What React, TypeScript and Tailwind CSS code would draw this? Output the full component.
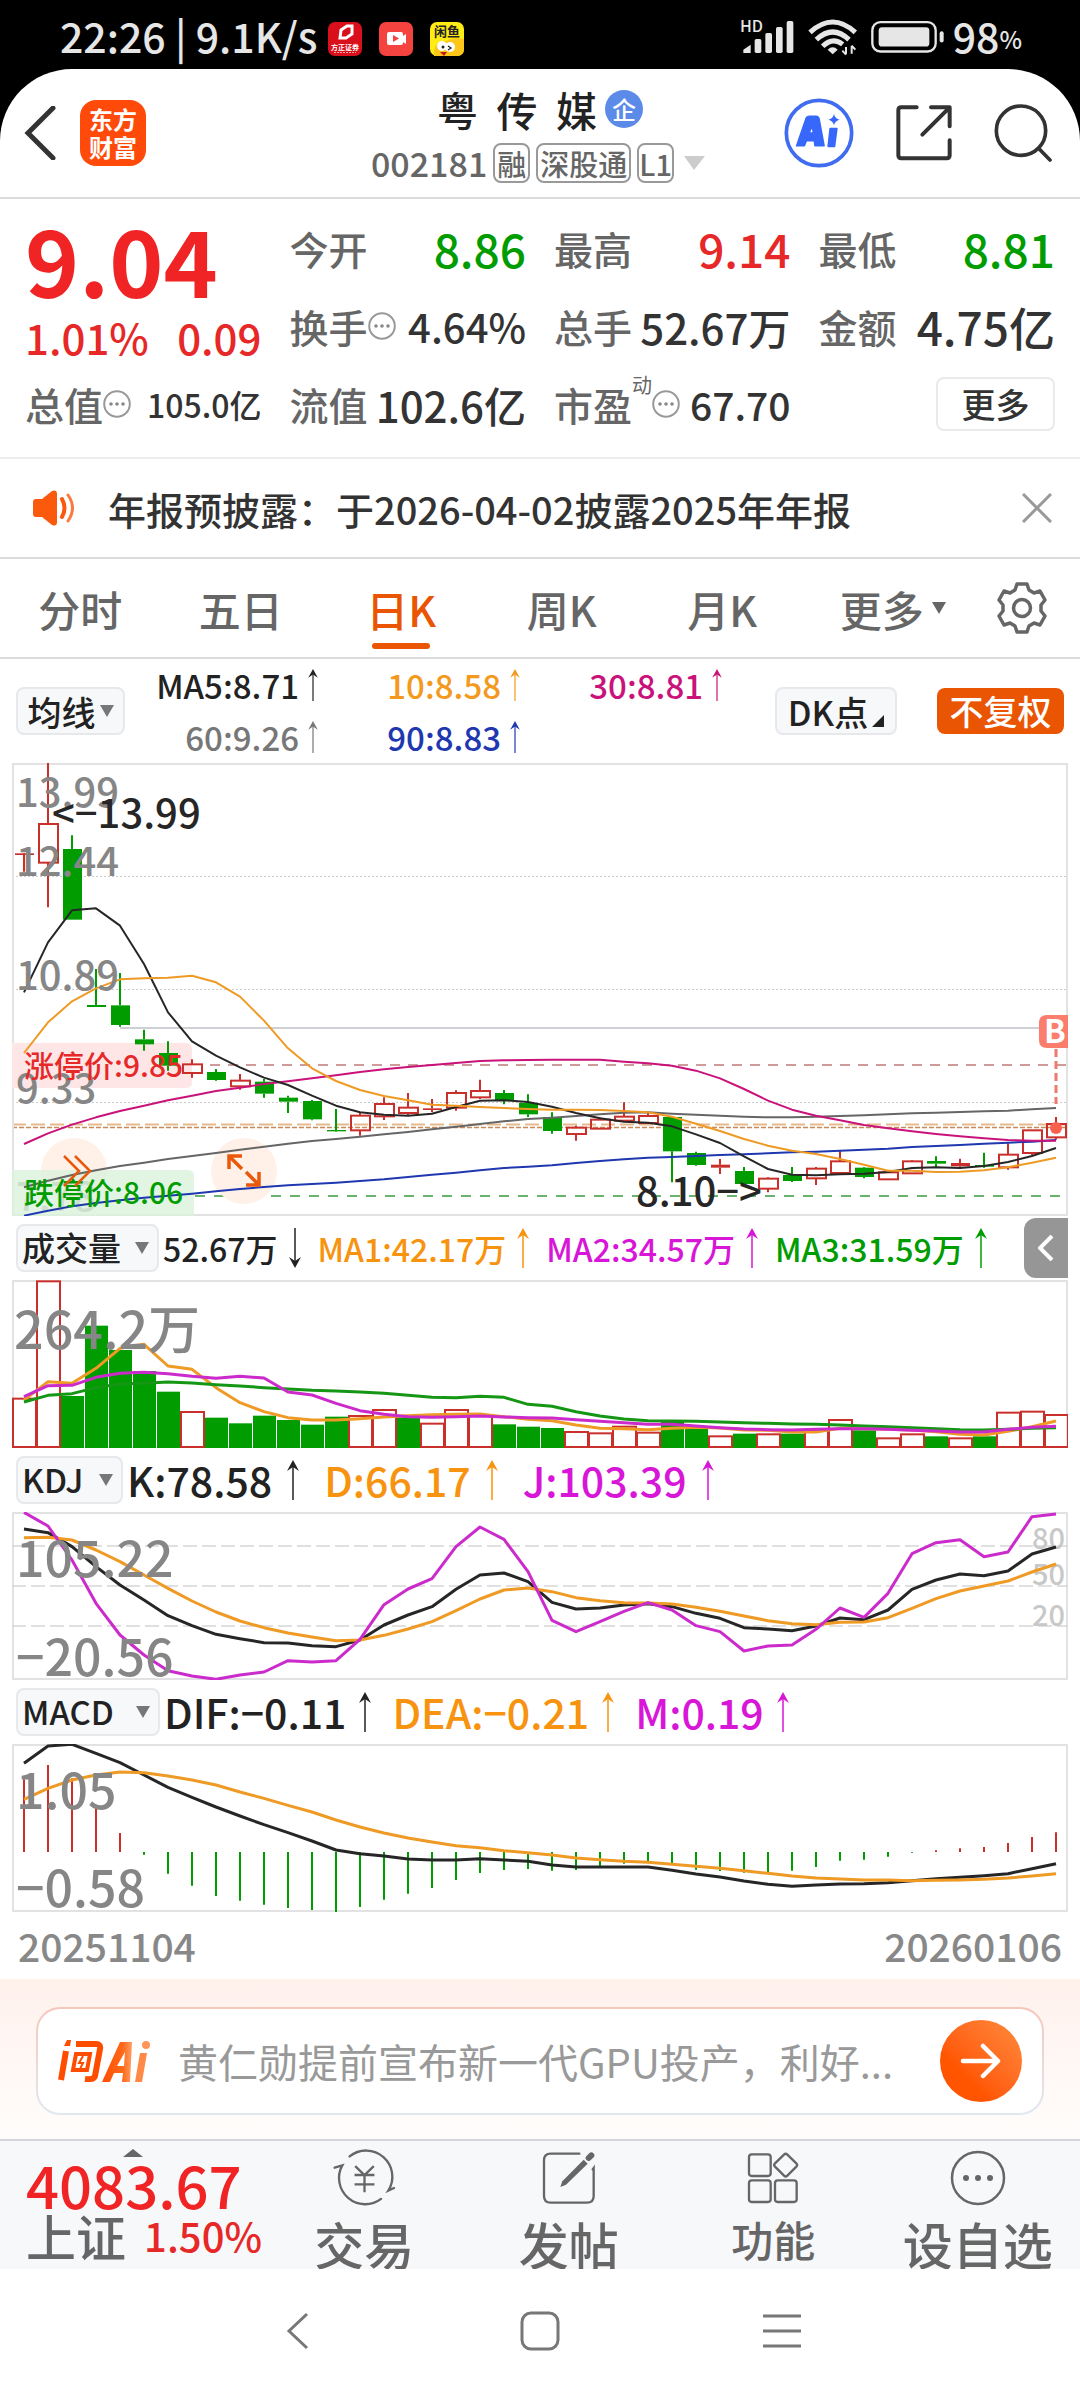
import React from 'react';

const RED = '#c9302c';
const GREEN = '#009c00';

// チャートの横位置：44本、間隔24px
const STEP = 24;
const cx = (i: number) => 12 + i * STEP;

// [high, top, bottom, low, type]  r = 中空, s = 赤塗り, g = 緑塗り
type Candle = [number, number, number, number, 'r' | 's' | 'g'];

// 縦の値は1/3px単位。枠の上端は各チャートのtopで指定
const candles: Candle[] = [
  [315, 313, 318, 368, 's'], [42, 225, 341, 475, 'r'], [259, 300, 512, 512, 'g'], [660, 768, 774, 774, 'g'],
  [672, 769, 828, 833, 'g'], [842, 871, 886, 905, 'g'], [877, 912, 950, 965, 'g'], [931, 946, 972, 986, 'r'],
  [960, 969, 993, 995, 'g'], [975, 995, 1012, 1022, 'r'], [990, 998, 1034, 1046, 'g'], [1040, 1046, 1058, 1092, 'g'],
  [1053, 1056, 1111, 1114, 'g'], [1080, 1143, 1147, 1148, 'g'], [1090, 1100, 1144, 1160, 'r'], [1045, 1065, 1102, 1113, 'r'],
  [1032, 1076, 1092, 1098, 'r'], [1050, 1078, 1083, 1090, 's'], [1024, 1032, 1076, 1085, 'r'], [992, 1026, 1045, 1050, 'r'],
  [1023, 1032, 1054, 1066, 'g'], [1036, 1062, 1096, 1104, 'g'], [1090, 1104, 1146, 1154, 'g'], [1130, 1136, 1155, 1175, 'r'],
  [1105, 1112, 1139, 1140, 'r'], [1060, 1103, 1115, 1115, 'r'], [1092, 1101, 1122, 1124, 'r'], [1104, 1104, 1207, 1300, 'g'],
  [1208, 1212, 1248, 1250, 'g'], [1230, 1247, 1256, 1275, 's'], [1254, 1266, 1305, 1305, 'g'], [1285, 1289, 1319, 1330, 'r'],
  [1254, 1278, 1296, 1299, 'g'], [1254, 1259, 1288, 1308, 'r'], [1206, 1237, 1272, 1272, 'r'], [1254, 1256, 1284, 1288, 'g'],
  [1270, 1270, 1291, 1292, 'r'], [1234, 1237, 1273, 1275, 'r'], [1222, 1236, 1244, 1254, 'g'], [1229, 1242, 1252, 1260, 's'],
  [1211, 1248, 1253, 1256, 'g'], [1182, 1217, 1255, 1262, 'r'], [1143, 1144, 1212, 1218, 'r'], [1104, 1125, 1165, 1172, 'r'],
];

const ma5 = [730, 580, 484, 478, 530, 645, 790, 877, 920, 955, 986, 1008, 1040, 1070, 1090, 1097, 1100, 1094, 1074, 1055, 1054, 1059, 1073, 1092, 1108, 1118, 1121, 1132, 1156, 1182, 1222, 1260, 1277, 1279, 1276, 1274, 1269, 1257, 1255, 1257, 1251, 1239, 1221, 1197];
const ma10 = [912, 820, 757, 718, 691, 688, 686, 680, 700, 743, 815, 898, 958, 996, 1023, 1041, 1054, 1067, 1070, 1074, 1077, 1080, 1082, 1082, 1083, 1086, 1090, 1103, 1124, 1146, 1170, 1190, 1205, 1215, 1230, 1247, 1265, 1265, 1269, 1268, 1264, 1255, 1241, 1226];
const ma30 = [1185, 1153, 1127, 1105, 1086, 1070, 1054, 1040, 1026, 1016, 1005, 997, 988, 979, 969, 961, 954, 948, 942, 936, 934, 933, 932, 932, 932, 938, 943, 950, 965, 988, 1020, 1055, 1082, 1100, 1114, 1128, 1138, 1147, 1155, 1162, 1168, 1173, 1175, 1175];
const ma60 = [1315, 1295, 1278, 1264, 1251, 1241, 1230, 1221, 1212, 1202, 1193, 1184, 1176, 1170, 1163, 1156, 1149, 1141, 1133, 1125, 1117, 1110, 1106, 1101, 1096, 1091, 1090, 1094, 1097, 1100, 1103, 1105, 1105, 1103, 1101, 1099, 1096, 1093, 1091, 1089, 1087, 1085, 1081, 1077];
const ma90 = [1400, 1385, 1372, 1362, 1354, 1346, 1340, 1334, 1327, 1320, 1314, 1309, 1305, 1301, 1296, 1291, 1284, 1277, 1271, 1264, 1257, 1253, 1249, 1242, 1236, 1231, 1226, 1224, 1221, 1218, 1216, 1213, 1210, 1208, 1205, 1202, 1199, 1194, 1191, 1188, 1184, 1181, 1178, 1173];

const volumes = [563, 211, 558, 347, 420, 483, 545, 603, 623, 640, 617, 630, 644, 620, 615, 597, 622, 638, 597, 615, 643, 650, 654, 663, 667, 647, 665, 630, 655, 676, 671, 670, 671, 657, 627, 661, 682, 670, 679, 682, 679, 605, 602, 612];
const volumeUp = 'rrgggggrggggggrrgrrrgggrrrrggrgrgrrgrrgrgrrr';
const vol1 = [570, 515, 520, 475, 415, 403, 468, 478, 533, 578, 605, 623, 630, 630, 626, 621, 617, 614, 613, 612, 620, 628, 632, 645, 655, 656, 659, 655, 652, 654, 660, 661, 666, 666, 655, 656, 658, 660, 665, 673, 675, 664, 650, 633];
const vol2 = [560, 527, 526, 502, 490, 487, 491, 499, 505, 499, 504, 546, 555, 580, 602, 613, 620, 622, 620, 618, 621, 623, 624, 629, 634, 638, 643, 643, 648, 653, 657, 659, 660, 658, 656, 656, 658, 661, 663, 666, 666, 658, 652, 649];
const vol3 = [576, 556, 551, 533, 522, 520, 516, 519, 524, 528, 533, 537, 541, 543, 546, 550, 556, 562, 563, 559, 562, 583, 589, 605, 618, 627, 632, 633, 634, 636, 638, 640, 642, 643, 645, 648, 650, 653, 656, 659, 660, 658, 655, 653];

const kLine = [237, 248, 290, 350, 405, 450, 497, 527, 553, 566, 578, 579, 587, 590, 570, 525, 495, 470, 418, 375, 369, 395, 457, 477, 474, 465, 461, 470, 490, 505, 533, 537, 542, 528, 504, 509, 480, 418, 390, 372, 377, 363, 312, 291];
const dLine = [263, 262, 270, 300, 335, 375, 415, 453, 486, 513, 533, 549, 561, 572, 570, 556, 537, 515, 482, 447, 420, 414, 425, 443, 452, 458, 459, 462, 472, 484, 498, 512, 521, 524, 517, 516, 503, 475, 446, 423, 408, 393, 366, 342];
const jLine = [187, 228, 330, 460, 555, 615, 662, 678, 688, 675, 666, 632, 636, 632, 568, 464, 417, 386, 290, 231, 268, 365, 511, 545, 515, 484, 458, 480, 527, 545, 603, 588, 585, 538, 474, 502, 430, 311, 278, 269, 320, 306, 200, 192];

const macd = [298, 255, 295, 385, 459, 524, 581, 617, 648, 662, 674, 684, 690, 696, 681, 659, 641, 624, 600, 579, 570, 567, 572, 570, 561, 551, 543, 554, 569, 573, 578, 576, 572, 561, 542, 539, 530, 518, 511, 505, 501, 489, 471, 457];
const dif = [250, 198, 193, 220, 248, 285, 322, 352, 381, 408, 434, 458, 483, 510, 521, 528, 537, 540, 540, 536, 540, 544, 555, 561, 561, 561, 561, 571, 582, 591, 603, 613, 619, 615, 612, 611, 608, 602, 596, 592, 587, 581, 566, 551];
const dea = [358, 325, 300, 285, 276, 278, 288, 300, 315, 336, 355, 376, 396, 420, 441, 459, 474, 486, 497, 503, 512, 518, 525, 534, 539, 544, 547, 553, 559, 565, 572, 580, 588, 594, 597, 600, 600, 602, 601, 600, 598, 594, 588, 581];

function Line({ data, top, color, width = 3 }: { data: number[]; top: number; color: string; width?: number }) {
  const points = data.map((v, i) => `${cx(i)},${(v - top) / 3}`).join(' ');
  return <polyline points={points} fill="none" stroke={color} strokeWidth={width} strokeLinejoin="round" />;
}

function Frame({ height }: { height: number }) {
  return <rect x="1" y="1" width="1054" height={height - 2} fill="none" stroke="#e2e2e4" strokeWidth="2" />;
}

function Arrow({ down = false, small = false }: { down?: boolean; small?: boolean }) {
  return (
    <svg viewBox="0 0 14 40" className={`${small ? 'h-8 w-3' : 'h-10 w-3.5'} ${down ? 'rotate-180' : ''} shrink-0`} aria-hidden="true">
      <path d="M7 3V40" stroke="currentColor" strokeWidth="1.5" />
      <path d="M7 0L13 11L7 7L1 11Z" fill="currentColor" />
    </svg>
  );
}

function Caret({ className = '' }: { className?: string }) {
  return (
    <svg viewBox="0 0 14 12" className={`h-3 w-3.5 shrink-0 ${className}`} aria-hidden="true">
      <path d="M0 0H14L7 12Z" fill="currentColor" />
    </svg>
  );
}

function Dots() {
  return (
    <svg viewBox="0 0 28 28" className="h-7 w-7 shrink-0" aria-hidden="true">
      <circle cx="14" cy="14" r="12.8" fill="none" stroke="#999" strokeWidth="2" />
      <circle cx="8" cy="14" r="1.8" fill="#888" />
      <circle cx="14" cy="14" r="1.8" fill="#888" />
      <circle cx="20" cy="14" r="1.8" fill="#888" />
    </svg>
  );
}

function StatusBar() {
  return (
    <div className="flex h-[69px] items-center pl-[60px] pr-[58px] pt-1 font-medium text-[#e6e6e6]">
      <span className="whitespace-nowrap pb-1 text-[41px] leading-[48px]">22:26 | 9.1K/s</span>
      <div className="ml-2.5 flex items-center gap-[17px] pt-1">
        <svg viewBox="0 0 34 34" className="h-[34px] w-[34px]">
          <rect width="34" height="34" rx="7" fill="#d9101c" />
          <path d="M13 8L19 4H24V12L18 16H12Z" fill="none" stroke="#fff" strokeWidth="3" />
          <text x="17" y="28" textAnchor="middle" fontSize="7" fontWeight="700" fill="#fff">方正证券</text>
          <path d="M6 30.500H28" stroke="#f4a5a9" strokeWidth="1" strokeDasharray="2 1" />
        </svg>
        <svg viewBox="0 0 34 34" className="h-[34px] w-[34px]">
          <rect width="34" height="34" rx="7" fill="#f5443f" />
          <path d="M10 10H22Q24 10 24 12V14L27 12V22L24 20V21Q24 23 22 23H10Q8 23 8 21V12Q8 10 10 10Z" fill="#fff" />
          <path d="M14 13L20 16.500L14 20Z" fill="#f5443f" />
        </svg>
        <svg viewBox="0 0 34 34" className="h-[34px] w-[34px]">
          <rect width="34" height="34" rx="7" fill="#ffec14" />
          <path d="M4 34Q3 18 17 19Q22 15 34 17V27Q34 34 27 34Z" fill="#ffc61a" />
          <text x="17" y="14" textAnchor="middle" fontSize="13" fontWeight="700" fill="#222">闲鱼</text>
          <circle cx="12" cy="24" r="5" fill="#fff" />
          <circle cx="20" cy="25" r="5" fill="#fff" />
          <circle cx="13" cy="25" r="1.500" fill="#222" />
          <path d="M18 24L21 26L18 28" fill="none" stroke="#222" strokeWidth="1.300" />
          <path d="M10 30H17L14 34Z" fill="#c3171c" />
        </svg>
      </div>
      <div className="ml-auto flex items-center">
        <svg viewBox="40 30 165 120" className="h-10 w-[55px] overflow-visible" fill="currentColor">
          <text x="40" y="75" fontSize="48" fontWeight="500">HD</text>
          <path d="M50 138V128L72 113V138Z" />
          <rect x="84" y="96" width="20" height="42" rx="5" />
          <rect x="116" y="78" width="20" height="60" rx="5" />
          <rect x="148" y="60" width="20" height="78" rx="5" />
          <rect x="180" y="42" width="20" height="96" rx="5" />
        </svg>
        <svg viewBox="236 30 156 120" className="ml-3 h-10 w-[52px]" fill="none" stroke="currentColor" strokeWidth="15">
          <path d="M245 76Q313 14 381 76" />
          <path d="M264 98Q313 52 362 98" />
          <path d="M283 118Q313 88 343 112" />
          <path d="M298 128Q313 114 328 128L313 142Z" fill="currentColor" stroke="none" />
          <path d="M353 142V120M353 143L342 131M370 116V140M370 116L381 128" strokeWidth="6" />
        </svg>
        <svg viewBox="432 36 222 104" className="ml-3 h-[35px] w-[74px]">
          <rect x="436" y="45" width="190" height="88" rx="24" fill="none" stroke="currentColor" strokeWidth="7" />
          <rect x="455" y="60" width="152" height="58" rx="10" fill="currentColor" />
          <rect x="638" y="72" width="12" height="34" rx="6" fill="currentColor" />
        </svg>
        <span className="ml-2 pb-1 text-[41px] leading-[48px]">98</span>
        <span className="pt-1 text-2xl">%</span>
      </div>
    </div>
  );
}

function Header() {
  const tag = 'rounded-lg border-2 border-[#999] text-[29px] leading-9';
  return (
    <header className="grid h-[130px] grid-cols-[1fr_auto_1fr] items-center border-b-2 border-[#dcdcdc] pl-6 pr-7">
      <div className="flex items-center gap-6">
        <button type="button" aria-label="返回">
          <svg viewBox="0 0 32 54" className="h-[54px] w-8" fill="none" stroke="#333" strokeWidth="5">
            <path d="M29 2L4 27L29 52" strokeLinecap="round" />
          </svg>
        </button>
        <div className="flex h-[66px] w-[66px] flex-col items-center justify-center rounded-2xl bg-[#ff4a0a] text-2xl font-bold leading-7 text-white">
          <span>东方</span>
          <span>财富</span>
        </div>
      </div>
      <div className="flex flex-col items-center">
        <div className="flex items-center gap-2 pb-2 pl-1">
          <h1 className="whitespace-pre text-[41px] font-medium leading-[52px] text-[#222]">粤  传  媒</h1>
          <span className="flex h-[38px] w-[38px] items-center justify-center rounded-full bg-[#5c8ae8] text-2xl font-medium text-white">企</span>
        </div>
        <div className="flex items-center gap-1.5 font-medium text-[#666]">
          <span className="text-[34px] leading-10">002181</span>
          <span className={`${tag} px-0.5`}>融</span>
          <span className={`${tag} px-0.5`}>深股通</span>
          <span className={tag}>L1</span>
          <svg viewBox="0 0 21 14" className="ml-1 h-3.5 w-[21px]" aria-hidden="true">
            <path d="M0 0H21L10 14Z" fill="#ccc" />
          </svg>
        </div>
      </div>
      <div className="flex items-center justify-end gap-[42px]">
        <button type="button" aria-label="AI">
          <svg viewBox="0 0 210 210" className="h-[70px] w-[70px]">
            <circle cx="105" cy="105" r="98" fill="none" stroke="#3f6cf0" strokeWidth="11" />
            <path d="M38 143L66 62Q69 55 77 55H96Q103 55 105 62L120 143H93L91 128H67L61 143Z M75 105H88L85 82Z" fill="#3768fb" fillRule="evenodd" stroke="#3768fb" strokeWidth="5" strokeLinejoin="round" />
            <path d="M139 92H158L151 145H133Z" fill="#3768fb" stroke="#3768fb" strokeWidth="6" strokeLinejoin="round" />
            <path d="M150 48Q153 62 167 65Q153 68 150 82Q147 68 133 65Q147 62 150 48Z" fill="#3768fb" />
          </svg>
        </button>
        <button type="button" aria-label="分享">
          <svg viewBox="0 0 168 168" className="h-14 w-14" fill="none" stroke="#333" strokeWidth="12" strokeLinecap="round" strokeLinejoin="round">
            <path d="M62 7H16Q7 7 7 16V151Q7 160 16 160H152Q161 160 161 151V106" />
            <path d="M105 7H161V64M158 10L79 89" />
          </svg>
        </button>
        <button type="button" aria-label="搜索">
          <svg viewBox="0 0 174 174" className="h-[58px] w-[58px]" fill="none" stroke="#333" strokeWidth="11" strokeLinecap="round">
            <circle cx="81" cy="80" r="74" />
            <path d="M135 134L168 168" />
          </svg>
        </button>
      </div>
    </header>
  );
}

function Quote() {
  const label = 'text-[39px] text-[#666]';
  const cell = 'flex items-center justify-between whitespace-nowrap';
  return (
    <section className="grid h-[260px] grid-cols-4 gap-x-7 border-b-2 border-[#ededed] px-[25px] pt-2.5 font-medium text-[#333]">
      <div className="flex flex-col">
        <div className="h-[102px] text-[92px] font-bold leading-[98px] text-[#f02424]">9.04</div>
        <div className="flex h-[50px] items-center justify-between text-[42px] text-[#e62828]">
          <span>1.01%</span>
          <span>0.09</span>
        </div>
        <div className={`${cell} h-[78px] pt-2`}>
          <span className={label}>总值</span>
          <Dots />
          <span className="ml-auto text-[32px]">105.0亿</span>
        </div>
      </div>
      <div className="grid grid-rows-[78px_78px_78px]">
        <div className={cell}>
          <span className={label}>今开</span>
          <span className="text-[46px] text-[#009c00]">8.86</span>
        </div>
        <div className={cell}>
          <span className={label}>换手</span>
          <Dots />
          <span className="ml-auto text-[40px]">4.64%</span>
        </div>
        <div className={cell}>
          <span className={label}>流值</span>
          <span className="text-[42px]">102.6亿</span>
        </div>
      </div>
      <div className="grid grid-rows-[78px_78px_78px]">
        <div className={cell}>
          <span className={label}>最高</span>
          <span className="text-[46px] text-[#e62828]">9.14</span>
        </div>
        <div className={cell}>
          <span className={label}>总手</span>
          <span className="text-[42px]">52.67万</span>
        </div>
        <div className={cell}>
          <span className={label}>市盈</span>
          <sup className="self-start pt-5 text-xl font-normal leading-5 text-[#666]">动</sup>
          <Dots />
          <span className="ml-auto text-[39px]">67.70</span>
        </div>
      </div>
      <div className="grid grid-rows-[78px_78px_78px]">
        <div className={cell}>
          <span className={label}>最低</span>
          <span className="text-[46px] text-[#009c00]">8.81</span>
        </div>
        <div className={cell}>
          <span className={label}>金额</span>
          <span className="text-[46px]">4.75亿</span>
        </div>
        <div className="flex items-center justify-end">
          <button type="button" className="h-[54px] w-[119px] rounded-lg border-2 border-[#e8eaec] text-[34px] leading-[48px]">更多</button>
        </div>
      </div>
    </section>
  );
}

function Notice() {
  return (
    <section className="flex h-[100px] items-center border-b-2 border-[#dcdcdc] pl-8 pr-7">
      <svg viewBox="0 0 44 36" className="h-9 w-11 shrink-0">
        <path d="M4 9H10L20 1Q25 -1 25 4V32Q25 37 20 35L10 27H4Q1 27 1 24V12Q1 9 4 9Z" fill="#fb5a0d" />
        <path d="M30 9Q35 18 30 27" fill="none" stroke="#fb5a0d" strokeWidth="4" strokeLinecap="round" />
        <path d="M36 5Q45 18 36 31" fill="none" stroke="#fb7a3d" strokeWidth="3" strokeLinecap="round" />
      </svg>
      <a href="#notice" className="ml-8 whitespace-nowrap text-[38px] font-medium text-[#333]">年报预披露：于2026-04-02披露2025年年报</a>
      <button type="button" aria-label="关闭" className="ml-auto">
        <svg viewBox="0 0 30 30" className="h-[30px] w-[30px]" stroke="#999" strokeWidth="3">
          <path d="M1 1L29 29M29 1L1 29" />
        </svg>
      </button>
    </section>
  );
}

function Tabs() {
  const tab = 'flex h-full flex-1 items-center justify-center text-[42px] font-medium text-[#666]';
  return (
    <nav className="flex h-[100px] items-center border-b-2 border-[#dcdcdc]">
      <button type="button" className={tab}>分时</button>
      <button type="button" className={tab}>五日</button>
      <button type="button" className="relative flex h-full flex-1 items-center justify-center text-[42px] font-medium text-[#ea5504]">
        日K
        <span className="absolute bottom-2 h-1.5 w-[58px] rounded-full bg-[#ea5504]" />
      </button>
      <button type="button" className={tab}>周K</button>
      <button type="button" className={tab}>月K</button>
      <button type="button" className={tab}>
        <span className="ml-5 mr-2">更多</span>
        <Caret />
      </button>
      <button type="button" aria-label="设置" className="flex w-[117px] justify-center">
        <svg viewBox="0 0 52 52" className="h-[52px] w-[52px]" fill="none" stroke="#666" strokeWidth="3.500" strokeLinejoin="round">
          <path d="M21 2H31L33 8L38 11L44 9L49 18L45 23V29L49 34L44 43L38 41L33 44L31 50H21L19 44L14 41L8 43L3 34L7 29V23L3 18L8 9L14 11L19 8Z" />
          <circle cx="26" cy="26" r="8.500" />
        </svg>
      </button>
    </nav>
  );
}

function MaLegend() {
  const item = 'flex items-center justify-end gap-2';
  return (
    <div className="flex h-[104px] items-center px-4 font-medium">
      <button type="button" className="flex h-12 w-[109px] items-center justify-center gap-1 rounded-lg border-2 border-[#e6e8ec] bg-[#f7f8fa] text-[34px] text-[#222]">
        均线
        <Caret className="text-[#777]" />
      </button>
      <div className="grid grid-cols-[194px_202px_202px] text-[33px] leading-[52px]">
        <span className={`${item} text-[#222]`}>MA5:8.71<Arrow small /></span>
        <span className={`${item} text-[#f39a1e]`}>10:8.58<Arrow small /></span>
        <span className={`${item} text-[#c9137a]`}>30:8.81<Arrow small /></span>
        <span className={`${item} text-[#777]`}>60:9.26<Arrow small /></span>
        <span className={`${item} text-[#1f38b0]`}>90:8.83<Arrow small /></span>
      </div>
      <button type="button" className="ml-auto flex h-12 w-[122px] items-center justify-center gap-1 rounded-lg border-2 border-[#e6e8ec] bg-[#f7f8fa] text-[34px] text-[#222]">
        DK点
        <svg viewBox="0 0 12 12" className="mb-1.5 h-3 w-3 self-end"><path d="M12 0V12H0Z" fill="#222" /></svg>
      </button>
      <button type="button" className="ml-10 h-[46px] w-[127px] rounded-lg bg-[#ea5504] text-[34px] leading-[44px] text-white">不复权</button>
    </div>
  );
}

function KChart() {
  const y = (v: number) => (v - 42) / 3;
  return (
    <svg viewBox="0 0 1056 453" className="block w-full" fontWeight="500">
      <g stroke="#ccc" strokeDasharray="2 2">
        <path d="M0 113.500H1056" />
        <path d="M0 226.500H1056" />
        <path d="M0 339.500H1056" />
      </g>
      <path d="M108 265H1028" stroke="#cfd0d3" strokeWidth="2" />
      <path d="M0 361.500H1056" stroke="#e5b98c" strokeWidth="2" strokeDasharray="14 5" />
      <path d="M0 364.500H1056" stroke="#c98a57" strokeWidth="1.500" strokeDasharray="5 2" />
      <path d="M198 302H1056" stroke="#cf9a9a" strokeWidth="2" strokeDasharray="10 8" />
      <path d="M183 433H1056" stroke="#3a9a3f" strokeWidth="1.500" strokeDasharray="10 9" />
      <Frame height={453} />

      {/* 涨停价・跌停价のラベル背景 */}
      <path d="M0 280H174Q180 280 180 286V319Q180 325 174 325H0Z" fill="#fee6e6" />
      <circle cx="62" cy="408" r="33" fill="#fff0e8" />
      <circle cx="232" cy="408" r="33" fill="#fff0e8" />
      <text x="4" y="448" fontSize="40" fill="#868686">7.78</text>
      <path d="M0 407H176Q182 407 182 413V453H0Z" fill="#dcf2dc" fillOpacity="0.82" />

      {candles.map(([high, top, bottom, low, type], i) => {
        const color = type === 'g' ? GREEN : RED;
        return (
          <g key={i} stroke={color} strokeWidth="2">
            <path d={`M${cx(i)} ${y(high)}V${y(top)}M${cx(i)} ${y(bottom)}V${y(low)}`} />
            {type === 'r' ? (
              <rect x={cx(i) - 9} y={y(top)} width="19" height={y(bottom) - y(top)} fill="none" />
            ) : (
              <rect x={cx(i) - 9} y={y(top)} width="19" height={y(bottom) - y(top)} fill={color} stroke="none" />
            )}
          </g>
        );
      })}

      <Line data={ma60} top={42} color="#666" width={2} />
      <Line data={ma90} top={42} color="#1f38b0" width={2} />
      <Line data={ma30} top={42} color="#c9137a" width={2} />
      <Line data={ma5} top={42} color="#262626" width={2} />
      <Line data={ma10} top={42} color="#ee9a24" width={2} />

      <g fontSize="40" fill="#868686">
        <text x="4" y="44">13.99</text>
        <text x="4" y="113">12.44</text>
        <text x="4" y="227">10.89</text>
        <text x="4" y="340">9.33</text>
      </g>
      <g fontSize="40" fill="#262626">
        <text x="40" y="65">&lt;−13.99</text>
        <text x="624" y="443">8.10−&gt;</text>
      </g>
      <text x="12" y="314" fontSize="30" fill="#e62828">涨停价:9.85</text>
      <text x="12" y="441" fontSize="30" fill="#009c00">跌停价:8.06</text>

      <g fill="none" stroke="#e8590c" strokeWidth="2.500">
        <path d="M52 393L67 408L52 423M63 393L78 408L63 423" />
        <path d="M230 393H217V406M217 393L230 406M234 422H247V409M247 422L234 409" strokeWidth="3.500" />
      </g>

      <path d="M1044 286V341" stroke="#f0796b" strokeWidth="3" strokeDasharray="8 4" />
      <circle cx="1044" cy="365" r="6" fill="#f9604e" />
      <path d="M1035 252H1056V285H1035Q1027 285 1027 277V260Q1027 252 1035 252Z" fill="#fa7d6e" />
      <text x="1032" y="280" fontSize="32" fontWeight="700" fill="#fff">B</text>
    </svg>
  );
}

function VolumeChart() {
  return (
    <svg viewBox="0 0 1056 168" className="block w-full" fontWeight="500">
      <Frame height={168} />
      {volumes.map((v, i) => {
        const top = (v - 210) / 3;
        return volumeUp[i] === 'r' ? (
          <rect key={i} x={i * STEP + 1} y={top + 1} width="23" height={166 - top} fill="none" stroke={RED} strokeWidth="2" />
        ) : (
          <rect key={i} x={i * STEP + 1} y={top} width="23" height={168 - top} fill={GREEN} />
        );
      })}
      <Line data={vol1} top={210} color="#ee9a24" />
      <Line data={vol3} top={210} color="#159615" />
      <Line data={vol2} top={210} color="#cc2bcc" />
      <text x="2" y="69" fontSize="52" fill="#868686">264.2万</text>
    </svg>
  );
}

function KdjChart() {
  return (
    <svg viewBox="0 0 1056 168" className="block w-full" fontWeight="500">
      <Frame height={168} />
      <g stroke="#d6d6d6" strokeWidth="1.500" strokeDasharray="14 5">
        <path d="M0 34H1056" />
        <path d="M0 74H1056" />
        <path d="M0 114H1056" />
      </g>
      <g fontSize="29" fill="#c8c8c8" textAnchor="end">
        <text x="1053" y="37">80</text>
        <text x="1053" y="73">50</text>
        <text x="1053" y="114">20</text>
      </g>
      <Line data={kLine} top={186} color="#262626" />
      <Line data={dLine} top={186} color="#ee9a24" />
      <Line data={jLine} top={186} color="#cc2bcc" />
      <g fontSize="50" fill="#868686">
        <text x="4" y="65">105.22</text>
        <text x="4" y="164">−20.56</text>
      </g>
    </svg>
  );
}

function MacdChart() {
  return (
    <svg viewBox="0 0 1056 168" className="block w-full" fontWeight="500">
      <Frame height={168} />
      {macd.map((v, i) => (
        <path key={i} d={`M${cx(i)} 108V${(v - 192) / 3}`} stroke={v < 516 ? RED : GREEN} strokeWidth="2" />
      ))}
      <Line data={dif} top={192} color="#262626" />
      <Line data={dea} top={192} color="#ee9a24" />
      <g fontSize="50" fill="#868686">
        <text x="4" y="65">1.05</text>
        <text x="4" y="163">−0.58</text>
      </g>
    </svg>
  );
}

function PickerButton({ children, className }: { children: React.ReactNode; className: string }) {
  return (
    <button type="button" className={`flex h-12 shrink-0 items-center justify-between rounded-lg border-2 border-[#e6e8ec] bg-[#f7f8fa] px-1 text-[33px] text-[#222] ${className}`}>
      {children}
      <Caret className="mr-1 text-[#777]" />
    </button>
  );
}

function Charts() {
  const row = 'flex h-16 items-center whitespace-nowrap pl-1 font-medium';
  return (
    <section className="px-3">
      <KChart />
      <div className={`${row} text-[32px]`}>
        <PickerButton className="w-[143px]">成交量</PickerButton>
        <span className="ml-1 flex items-center gap-2.5 text-[#222]">52.67万<Arrow down /></span>
        <span className="ml-4 flex items-center gap-2.5 text-[#f7930e]">MA1:42.17万<Arrow /></span>
        <span className="ml-4 flex items-center gap-2.5 text-[#d816d8]">MA2:34.57万<Arrow /></span>
        <span className="ml-4 flex items-center gap-2.5 text-[#009c00]">MA3:31.59万<Arrow /></span>
        <button type="button" aria-label="展开" className="ml-auto flex h-[60px] w-11 items-center justify-center rounded-l-xl bg-[#969696]">
          <svg viewBox="0 0 16 26" className="h-[26px] w-4" fill="none" stroke="#fff" strokeWidth="4">
            <path d="M14 1L2 13L14 25" />
          </svg>
        </button>
      </div>
      <VolumeChart />
      <div className={`${row} text-[41px]`}>
        <PickerButton className="w-[107px]">KDJ</PickerButton>
        <span className="ml-1 flex items-center gap-3.5 text-[#222]">K:78.58<Arrow /></span>
        <span className="ml-6 flex items-center gap-3.5 text-[#f7930e]">D:66.17<Arrow /></span>
        <span className="ml-6 flex items-center gap-3.5 text-[#d816d8]">J:103.39<Arrow /></span>
      </div>
      <KdjChart />
      <div className={`${row} text-[41px]`}>
        <PickerButton className="w-36">MACD</PickerButton>
        <span className="ml-1 flex items-center gap-3 text-[#222]">DIF:−0.11<Arrow /></span>
        <span className="ml-5 flex items-center gap-3 text-[#f7930e]">DEA:−0.21<Arrow /></span>
        <span className="ml-5 flex items-center gap-3 text-[#d816d8]">M:0.19<Arrow /></span>
      </div>
      <MacdChart />
      <div className="flex h-[67px] items-center justify-between px-1.5 text-[39px] font-medium text-[#888]">
        <span>20251104</span>
        <span>20260106</span>
      </div>
    </section>
  );
}

function AskAi() {
  return (
    <section className="flex h-40 items-center bg-linear-to-b from-[#fff1ec] to-[#fffdfc] px-9 pt-1">
      <div className="w-full rounded-3xl bg-linear-to-b from-[#f6c6bb] to-[#e0e8f0] p-0.5">
        <form className="flex h-[104px] items-center rounded-[22px] bg-white pl-5 pr-5">
          <svg viewBox="0 0 92 42" className="h-[42px] w-[92px] shrink-0" role="img" aria-label="问Ai">
            <defs>
              <linearGradient id="ask" x1="0" x2="1">
                <stop offset="0" stopColor="#ff4d00" />
                <stop offset="0.7" stopColor="#ff6a1a" />
                <stop offset="1" stopColor="#ff9f66" />
              </linearGradient>
            </defs>
            <path d="M9 0L13 0L12 6H6Z" fill="#ff4d00" />
            <path d="M8 11L3 40M18 4H38Q43 4 42 9L37 36Q36 40 27 39" fill="none" stroke="#ff4d00" strokeWidth="6" />
            <path d="M18 14H32L29 30H15Z" fill="none" stroke="#ff4d00" strokeWidth="4" />
            <path d="M25 16L21 23H25L22 29" fill="none" stroke="#ff4d00" strokeWidth="2" />
            <path d="M44 42L62 2H74L72 42H64L65 33H56L52 42ZM59 26H66L67 12Z" fill="url(#ask)" fillRule="evenodd" />
            <path d="M82 13H89L84 42H77Z" fill="#ff8a47" />
            <circle cx="88" cy="5" r="4" fill="#ff9558" />
          </svg>
          <label htmlFor="ask-input" className="sr-only">问Ai</label>
          <input
            id="ask-input"
            type="text"
            placeholder="黄仁勋提前宣布新一代GPU投产，利好..."
            className="ml-7 h-full min-w-0 flex-1 bg-transparent text-[40px] text-[#333] outline-none placeholder:text-[#999]"
          />
          <button type="button" aria-label="发送" className="flex h-[82px] w-[82px] shrink-0 items-center justify-center rounded-full bg-linear-to-bl from-[#ff8a3a] to-[#ff5500] to-70%">
            <svg viewBox="0 0 42 36" className="h-9 w-[42px]" fill="none" stroke="#fff" strokeWidth="4.500" strokeLinecap="round" strokeLinejoin="round">
              <path d="M3 18H38M23 3L38 18L23 33" />
            </svg>
          </button>
        </form>
      </div>
    </section>
  );
}

function BottomBar() {
  const item = 'flex flex-1 flex-col items-center pt-2 text-[#666]';
  return (
    <nav className="flex h-[130px] overflow-hidden border-t-2 border-[#d4d5d8] bg-[#f7f8fa] font-medium">
      <a href="#index" className="flex w-[262px] shrink-0 flex-col pl-[26px]">
        <svg viewBox="0 0 20 8" className="mt-2 ml-[97px] h-2 w-5"><path d="M10 0L20 8H0Z" fill="#666" /></svg>
        <span className="text-[58px] leading-[54px] text-[#f02424]">4083.67</span>
        <span className="flex h-12 items-center justify-between whitespace-nowrap">
          <span className="text-[50px] leading-[48px] text-[#666]">上证</span>
          <span className="text-[40px] leading-[48px] text-[#e62828]">1.50%</span>
        </span>
      </a>
      <a href="#trade" className={item}>
        <svg viewBox="70 25 196 174" className="h-[58px] w-[65px] shrink-0" fill="none" stroke="#666" strokeWidth="7" strokeLinecap="round">
          <path d="M123 47A79 79 0 0 1 240 150L257 142" />
          <path d="M218 175A79 79 0 0 1 101 74L78 81" />
          <path d="M140 76L168 103L196 76M138 103H198M138 131H198M168 103V155" strokeLinecap="butt" />
        </svg>
        <span className="text-[50px] leading-[72px]">交易</span>
      </a>
      <a href="#post" className={item}>
        <svg viewBox="692 25 174 174" className="h-[58px] w-[58px] shrink-0" fill="none" stroke="#666" strokeWidth="7">
          <path d="M810 39H724Q704 39 704 59V166Q704 186 724 186H833Q853 186 853 166V82L850 86" strokeLinecap="round" />
          <path d="M823 57L835 69L770 132L753 139L759 122Z" fill="#666" stroke="none" />
          <path d="M838 52L846 44" strokeWidth="18" strokeLinecap="round" />
        </svg>
        <span className="text-[50px] leading-[72px]">发帖</span>
      </a>
      <a href="#features" className={item}>
        <svg viewBox="1305 25 174 174" className="h-[58px] w-[58px] shrink-0" fill="none" stroke="#666" strokeWidth="7">
          <rect x="1320" y="41" width="65" height="65" rx="8" />
          <rect x="1320" y="119" width="65" height="65" rx="8" />
          <rect x="1398" y="119" width="65" height="65" rx="8" />
          <path d="M1425 42Q1430 37 1435 42L1462 68Q1467 73 1462 78L1435 105Q1430 110 1425 105L1398 78Q1393 73 1398 68Z" />
        </svg>
        <span className="text-[42px] leading-[64px]">功能</span>
      </a>
      <a href="#watch" className={item}>
        <svg viewBox="0 0 58 58" className="h-[58px] w-[58px] shrink-0">
          <circle cx="29" cy="29" r="26" fill="none" stroke="#666" strokeWidth="2.500" />
          <circle cx="17" cy="29" r="3" fill="#666" />
          <circle cx="29" cy="29" r="3" fill="#666" />
          <circle cx="41" cy="29" r="3" fill="#666" />
        </svg>
        <span className="whitespace-nowrap text-[50px] leading-[72px]">设自选</span>
      </a>
    </nav>
  );
}

function SystemNav() {
  return (
    <div className="flex h-[132px] items-center justify-center gap-[202px] bg-white pb-2">
      <button type="button" aria-label="返回">
        <svg viewBox="0 0 40 40" className="h-10 w-10" fill="none" stroke="#777" strokeWidth="3"><path d="M29 3L11 20L29 37" /></svg>
      </button>
      <button type="button" aria-label="主页">
        <svg viewBox="0 0 40 40" className="h-10 w-10" fill="none" stroke="#777" strokeWidth="3"><rect x="2" y="2" width="36" height="36" rx="9" /></svg>
      </button>
      <button type="button" aria-label="最近任务">
        <svg viewBox="0 0 40 40" className="h-10 w-10" stroke="#777" strokeWidth="3"><path d="M1 5H39M1 20H39M1 35H39" /></svg>
      </button>
    </div>
  );
}

export default function App() {
  return (
    <div className="min-h-screen bg-black font-['Noto_Sans_CJK_SC','Liberation_Sans',sans-serif]">
      <StatusBar />
      <main className="overflow-hidden rounded-t-[72px] bg-white">
        <Header />
        <Quote />
        <Notice />
        <Tabs />
        <MaLegend />
        <Charts />
        <AskAi />
        <BottomBar />
        <SystemNav />
      </main>
    </div>
  );
}
